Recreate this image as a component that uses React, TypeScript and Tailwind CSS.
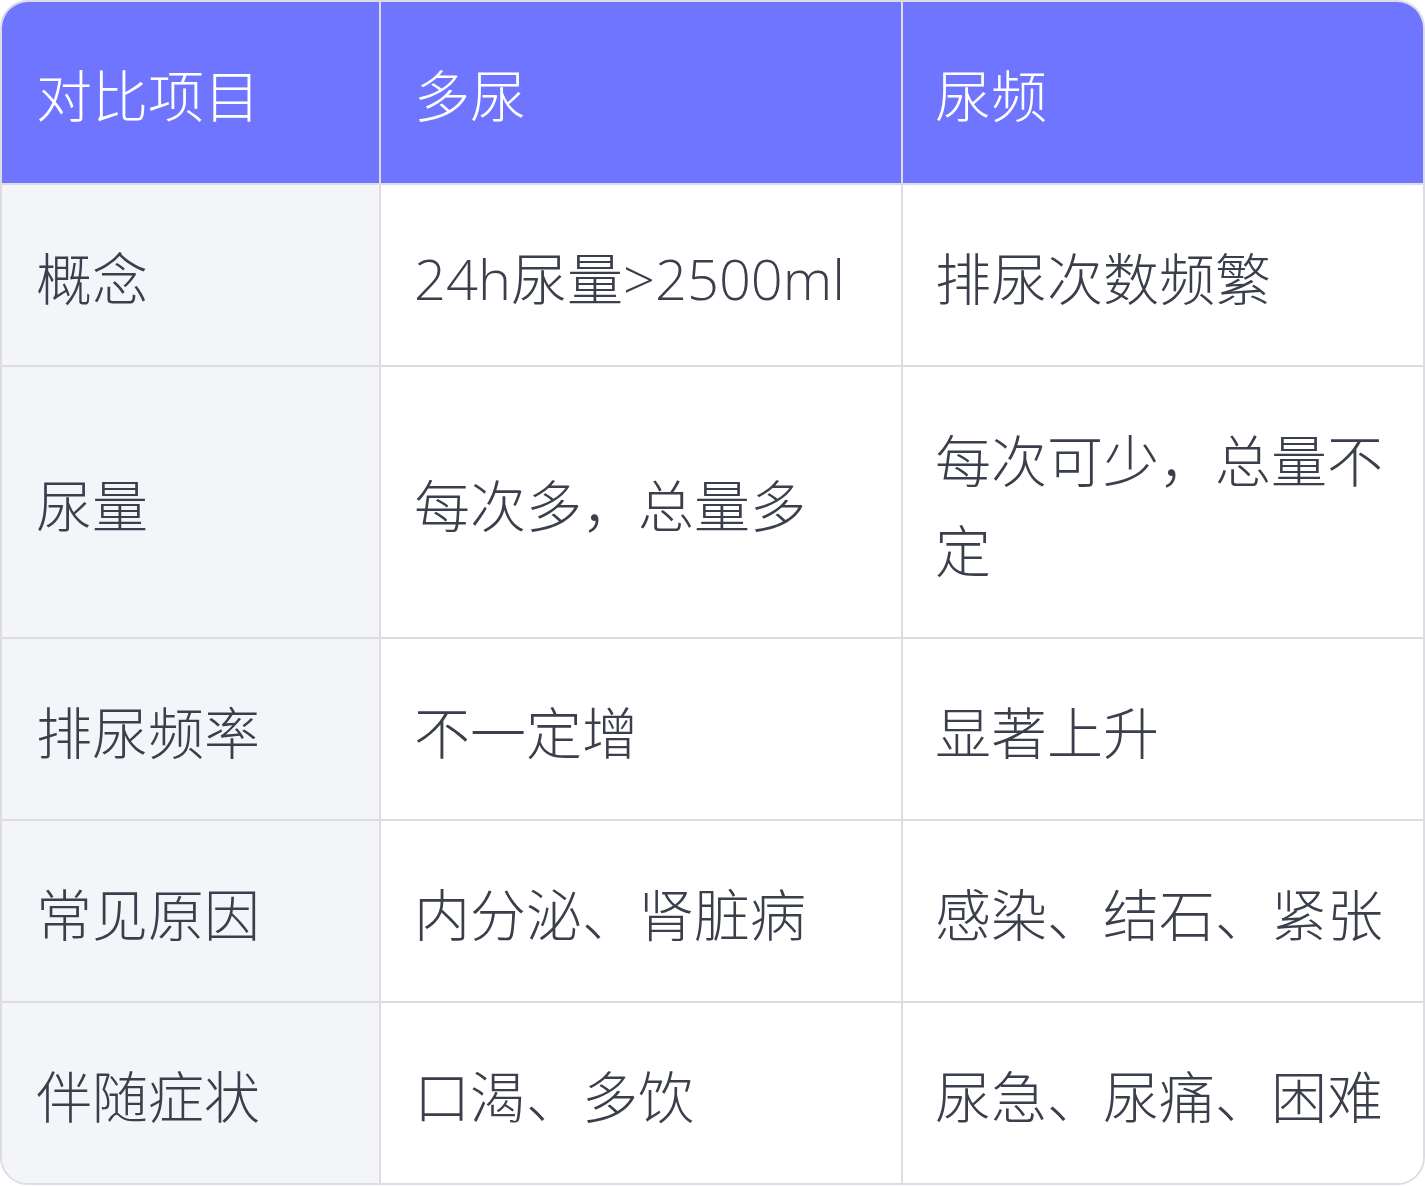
import React from "react";

const rows: [string, string, string][] = [
  ["概念", "24h尿量>2500ml", "排尿次数频繁"],
  ["尿量", "每次多，总量多", "每次可少，总量不定"],
  ["排尿频率", "不一定增", "显著上升"],
  ["常见原因", "内分泌、肾脏病", "感染、结石、紧张"],
  ["伴随症状", "口渴、多饮", "尿急、尿痛、困难"],
];

export default function App() {
  return (
    <div className="w-[1425px] bg-white">
      <div
        className="w-[1425px] border-2 border-[#dcdce2] rounded-[28px] overflow-hidden grid grid-cols-[377px_522px_522px] text-[56px] leading-[90px] font-light text-[#3b3e4b]"
        style={{ fontFamily: '"Open Sans", "Noto Sans CJK SC", sans-serif' }}
      >
        <div className="bg-[#6f75ff] text-white pl-[34px] pr-[30px] pt-[48px] pb-[42px] h-[181px]">对比项目</div>
        <div className="bg-[#6f75ff] text-white border-l-2 border-[#dcdce2] pl-[33px] pr-[30px] pt-[48px] pb-[42px] h-[181px]">多尿</div>
        <div className="bg-[#6f75ff] text-white border-l-2 border-[#dcdce2] pl-[32px] pr-[30px] pt-[48px] pb-[42px] h-[181px]">尿频</div>
        {rows.map((r, i) => (
          <React.Fragment key={i}>
            <div className="bg-[#f4f5f9] border-t-2 border-[#dcdce2] pl-[34px] pr-[30px] pt-[48px] pb-[42px] flex items-center">{r[0]}</div>
            <div className="bg-white border-t-2 border-l-2 border-[#dcdce2] pl-[33px] pr-[30px] pt-[48px] pb-[42px] flex items-center">{r[1]}</div>
            <div className="bg-white border-t-2 border-l-2 border-[#dcdce2] pl-[32px] pr-[30px] pt-[48px] pb-[42px] flex items-center">{r[2]}</div>
          </React.Fragment>
        ))}
      </div>
    </div>
  );
}
